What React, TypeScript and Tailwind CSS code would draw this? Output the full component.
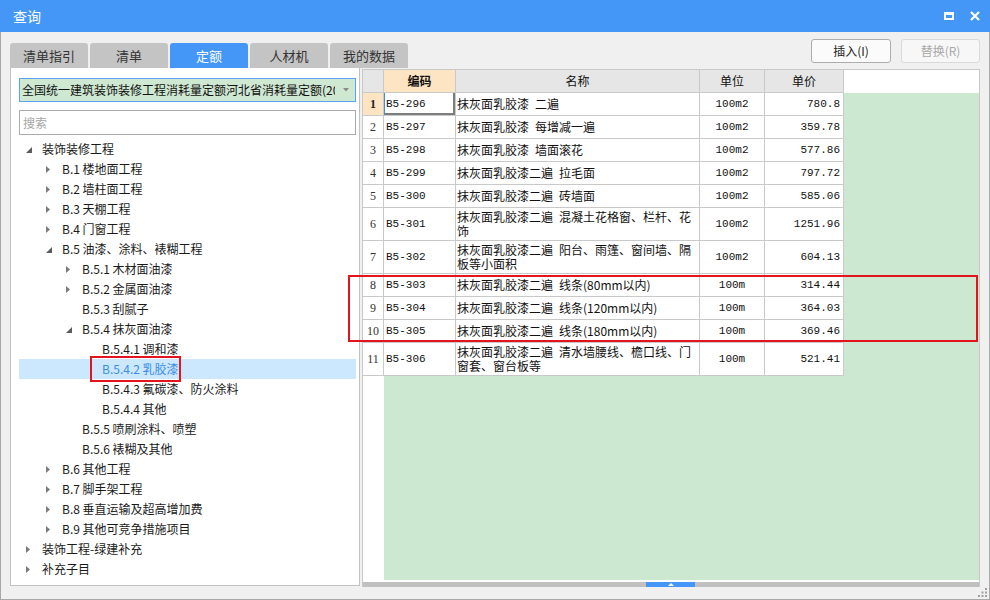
import React from "react";

const cjk = "font-['Microsoft_YaHei','Noto_Sans_CJK_SC',sans-serif]";
const mono = "font-['Liberation_Mono','Noto_Sans_CJK_SC',monospace]";

type TreeItem = { level: number; label: string; arrow?: "open" | "closed"; selected?: boolean };

const tree: TreeItem[] = [
  { level: 0, label: "装饰装修工程", arrow: "open" },
  { level: 1, label: "B.1 楼地面工程", arrow: "closed" },
  { level: 1, label: "B.2 墙柱面工程", arrow: "closed" },
  { level: 1, label: "B.3 天棚工程", arrow: "closed" },
  { level: 1, label: "B.4 门窗工程", arrow: "closed" },
  { level: 1, label: "B.5 油漆、涂料、裱糊工程", arrow: "open" },
  { level: 2, label: "B.5.1 木材面油漆", arrow: "closed" },
  { level: 2, label: "B.5.2 金属面油漆", arrow: "closed" },
  { level: 2, label: "B.5.3 刮腻子" },
  { level: 2, label: "B.5.4 抹灰面油漆", arrow: "open" },
  { level: 3, label: "B.5.4.1 调和漆" },
  { level: 3, label: "B.5.4.2 乳胶漆", selected: true },
  { level: 3, label: "B.5.4.3 氟碳漆、防火涂料" },
  { level: 3, label: "B.5.4.4 其他" },
  { level: 2, label: "B.5.5 喷刷涂料、喷塑" },
  { level: 2, label: "B.5.6 裱糊及其他" },
  { level: 1, label: "B.6 其他工程", arrow: "closed" },
  { level: 1, label: "B.7 脚手架工程", arrow: "closed" },
  { level: 1, label: "B.8 垂直运输及超高增加费", arrow: "closed" },
  { level: 1, label: "B.9 其他可竞争措施项目", arrow: "closed" },
  { level: 0, label: "装饰工程-绿建补充", arrow: "closed" },
  { level: 0, label: "补充子目", arrow: "closed" },
];

const sp = "\u2002";

type Row = { no: number; code: string; name: string[]; unit: string; price: string };

const rows: Row[] = [
  { no: 1, code: "B5-296", name: [`抹灰面乳胶漆${sp}二遍`], unit: "100m2", price: "780.8" },
  { no: 2, code: "B5-297", name: [`抹灰面乳胶漆${sp}每增减一遍`], unit: "100m2", price: "359.78" },
  { no: 3, code: "B5-298", name: [`抹灰面乳胶漆${sp}墙面滚花`], unit: "100m2", price: "577.86" },
  { no: 4, code: "B5-299", name: [`抹灰面乳胶漆二遍${sp}拉毛面`], unit: "100m2", price: "797.72" },
  { no: 5, code: "B5-300", name: [`抹灰面乳胶漆二遍${sp}砖墙面`], unit: "100m2", price: "585.06" },
  { no: 6, code: "B5-301", name: [`抹灰面乳胶漆二遍${sp}混凝土花格窗、栏杆、花`, "饰"], unit: "100m2", price: "1251.96" },
  { no: 7, code: "B5-302", name: [`抹灰面乳胶漆二遍${sp}阳台、雨篷、窗间墙、隔`, "板等小面积"], unit: "100m2", price: "604.13" },
  { no: 8, code: "B5-303", name: [`抹灰面乳胶漆二遍${sp}线条(80mm以内)`], unit: "100m", price: "314.44" },
  { no: 9, code: "B5-304", name: [`抹灰面乳胶漆二遍${sp}线条(120mm以内)`], unit: "100m", price: "364.03" },
  { no: 10, code: "B5-305", name: [`抹灰面乳胶漆二遍${sp}线条(180mm以内)`], unit: "100m", price: "369.46" },
  { no: 11, code: "B5-306", name: [`抹灰面乳胶漆二遍${sp}清水墙腰线、檐口线、门`, "窗套、窗台板等"], unit: "100m", price: "521.41" },
];

const tabs = ["清单指引", "清单", "定额", "人材机", "我的数据"];

function Arrow({ kind }: { kind?: "open" | "closed" }) {
  if (kind === "open")
    return (
      <svg width="6" height="6" viewBox="0 0 6 6" className="mt-[2px]">
        <polygon points="6,0 6,6 0,6" fill="#5c5c5c" />
      </svg>
    );
  if (kind === "closed")
    return (
      <svg width="4" height="7" viewBox="0 0 4 7">
        <polygon points="0,0 4,3.5 0,7" fill="#7a7a7a" />
      </svg>
    );
  return null;
}

function TreeRow({ item }: { item: TreeItem }) {
  return (
    <div className={`flex h-[20px] items-center ${item.selected ? "bg-[#cce8ff]" : ""}`}>
      <div style={{ width: item.level * 20 }} className="shrink-0" />
      <div className="flex w-[23px] shrink-0 items-center pl-[7px]">
        <Arrow kind={item.arrow} />
      </div>
      <span className={`whitespace-nowrap text-[12px] ${item.selected ? "text-[#3a8ee6]" : "text-[#1a1a1a]"}`}>
        {item.label}
      </span>
    </div>
  );
}

const cell = "border-r border-b border-[#c9c9c9] flex items-center";

export default function App() {
  return (
    <div className={`relative flex h-[600px] w-[990px] flex-col bg-[#f0f0f0] ${cjk}`}>
      {/* title bar */}
      <div className="flex h-[32px] shrink-0 items-center justify-between bg-[#4597f7] pl-[13px] pr-[10px]">
        <span className="text-[14px] text-white">查询</span>
        <div className="flex items-center gap-[16px]">
          <div className="h-[8px] w-[10px] border-[2px] border-t-[3px] border-white" />
          <svg width="10" height="10" viewBox="0 0 10 10">
            <path d="M1 1 L9 9 M9 1 L1 9" stroke="white" strokeWidth="2.2" />
          </svg>
        </div>
      </div>

      <div className="flex flex-1 flex-col border-x border-b border-[#a8a8a8] px-[9px]">
        {/* tabs + buttons */}
        <div className="flex h-[36px] shrink-0 items-start justify-between">
          <div className="flex gap-[2px] self-end">
            {tabs.map((t) => (
              <div
                key={t}
                className={`flex h-[25px] w-[78px] items-center justify-center rounded-t-[3px] text-[13px] ${
                  t === "定额" ? "bg-[#4597f7] text-white" : "bg-[#c4c4c4] text-[#333]"
                }`}
              >
                {t}
              </div>
            ))}
          </div>
          <div className="mt-[7px] flex gap-[10px]">
            <button className="h-[24px] w-[80px] rounded-[3px] border border-[#adadad] bg-[#fbfbfb] text-[12px] text-[#222]">
              插入(I)
            </button>
            <button className="h-[24px] w-[79px] rounded-[3px] border border-[#d9d9d9] bg-[#f7f7f7] text-[12px] text-[#a8a8a8]">
              替换(R)
            </button>
          </div>
        </div>

        {/* content */}
        <div className="flex h-[519px] shrink-0">
          {/* left panel */}
          <div className="mb-[1px] flex w-[350px] shrink-0 flex-col border border-t-0 border-[#c2c2c2] bg-white pl-[8px] pr-[3px] pt-[10px]">
            <div className="flex h-[24px] items-center justify-between border border-[#5aa2f2] bg-[#cfe8d2] pl-[2px] pr-[6px]">
              <span className="overflow-hidden whitespace-nowrap text-[12px] text-[#111]">
                全国统一建筑装饰装修工程消耗量定额河北省消耗量定额(2012)
              </span>
              <svg width="6" height="4" viewBox="0 0 6 4" className="ml-[8px] shrink-0">
                <polygon points="0,0 6,0 3,3.5" fill="#8a8a8a" />
              </svg>
            </div>
            <div className="mt-[8px] flex h-[25px] items-center border border-[#ababab] bg-white pl-[3px] text-[12px] text-[#a5a5a5]">
              搜索
            </div>
            <div className="mt-[4px] flex flex-col">
              {tree.map((item, i) => (
                <TreeRow key={i} item={item} />
              ))}
            </div>
          </div>

          {/* grid */}
          <div className="ml-[2px] mt-[1px] flex flex-1 flex-col border-x border-t border-[#c9c9c9] bg-white">
            <div className="flex h-[23px] shrink-0 text-[12px] text-[#111]">
              <div className={`${cell} w-[21px] bg-[#e6e6e6]`} />
              <div className={`${cell} w-[72px] justify-center bg-[#fde4c3] font-bold`}>编码</div>
              <div className={`${cell} w-[244px] justify-center bg-[#e6e6e6]`}>名称</div>
              <div className={`${cell} w-[65px] justify-center bg-[#e6e6e6]`}>单位</div>
              <div className={`${cell} w-[79px] justify-center bg-[#e6e6e6]`}>单价</div>
            </div>
            <div className="flex min-h-0 flex-1 flex-col bg-[#cde8d0]">
              {rows.map((r) => {
                const h = r.name.length > 1 ? "h-[33px]" : "h-[23px]";
                return (
                  <div key={r.no} className={`flex ${h} shrink-0`}>
                    <div
                      className={`${cell} w-[21px] justify-center ${
                        r.no === 1 ? "bg-[#fde4c3] font-bold text-[#222]" : "bg-white text-[#333]"
                      } font-['Liberation_Serif',serif] text-[12px]`}
                    >
                      {r.no}
                    </div>
                    <div
                      className={`${cell} w-[72px] bg-white pl-[2px] ${mono} text-[11px] text-[#111] ${
                        r.no === 1 ? "shadow-[inset_1px_0_0_#3b8fea,inset_-2px_-2px_0_#7d7d7d]" : ""
                      }`}
                    >
                      {r.code}
                    </div>
                    <div className={`${cell} w-[244px] bg-white pl-[1px]`}>
                      <div className="flex flex-col text-[12px] leading-[14px] text-[#111]">
                        {r.name.map((l, i) => (
                          <span key={i} className="whitespace-nowrap">
                            {l}
                          </span>
                        ))}
                      </div>
                    </div>
                    <div className={`${cell} w-[65px] justify-center bg-white ${mono} text-[11px] text-[#111]`}>
                      {r.unit}
                    </div>
                    <div className={`${cell} w-[79px] justify-end bg-white pr-[3px] ${mono} text-[11px] text-[#111]`}>
                      {r.price}
                    </div>
                  </div>
                );
              })}
              <div className="flex flex-1">
                <div className="w-[21px] bg-white" />
              </div>
            </div>
            <div className="h-[2px] shrink-0 bg-white" />
            <div className="flex h-[5px] shrink-0 bg-[#c0c0c0]">
              <div className="ml-[283px] flex w-[49px] items-center justify-center bg-[#4597f7]">
                <svg width="6" height="3" viewBox="0 0 6 3">
                  <polygon points="0,3 6,3 3,0" fill="white" />
                </svg>
              </div>
            </div>
          </div>
        </div>

        {/* bottom with grip */}
        <div className="flex flex-1 items-end justify-end pb-[1px]">
          <svg width="10" height="10" viewBox="0 0 10 10" className="-mr-[8px]">
            <rect x="7" y="0" width="2" height="2" fill="#a0a0a0" />
            <rect x="3.5" y="3.5" width="2" height="2" fill="#a0a0a0" />
            <rect x="7" y="3.5" width="2" height="2" fill="#a0a0a0" />
            <rect x="0" y="7" width="2" height="2" fill="#a0a0a0" />
            <rect x="3.5" y="7" width="2" height="2" fill="#a0a0a0" />
            <rect x="7" y="7" width="2" height="2" fill="#a0a0a0" />
          </svg>
        </div>
      </div>

      {/* highlight marks */}
      <div className="pointer-events-none absolute left-[90px] top-[356px] h-[26px] w-[91px] border-2 border-[#e3141c]" />
      <div className="pointer-events-none absolute left-[348px] top-[275px] h-[67px] w-[630px] border-2 border-[#e3141c]" />
    </div>
  );
}
